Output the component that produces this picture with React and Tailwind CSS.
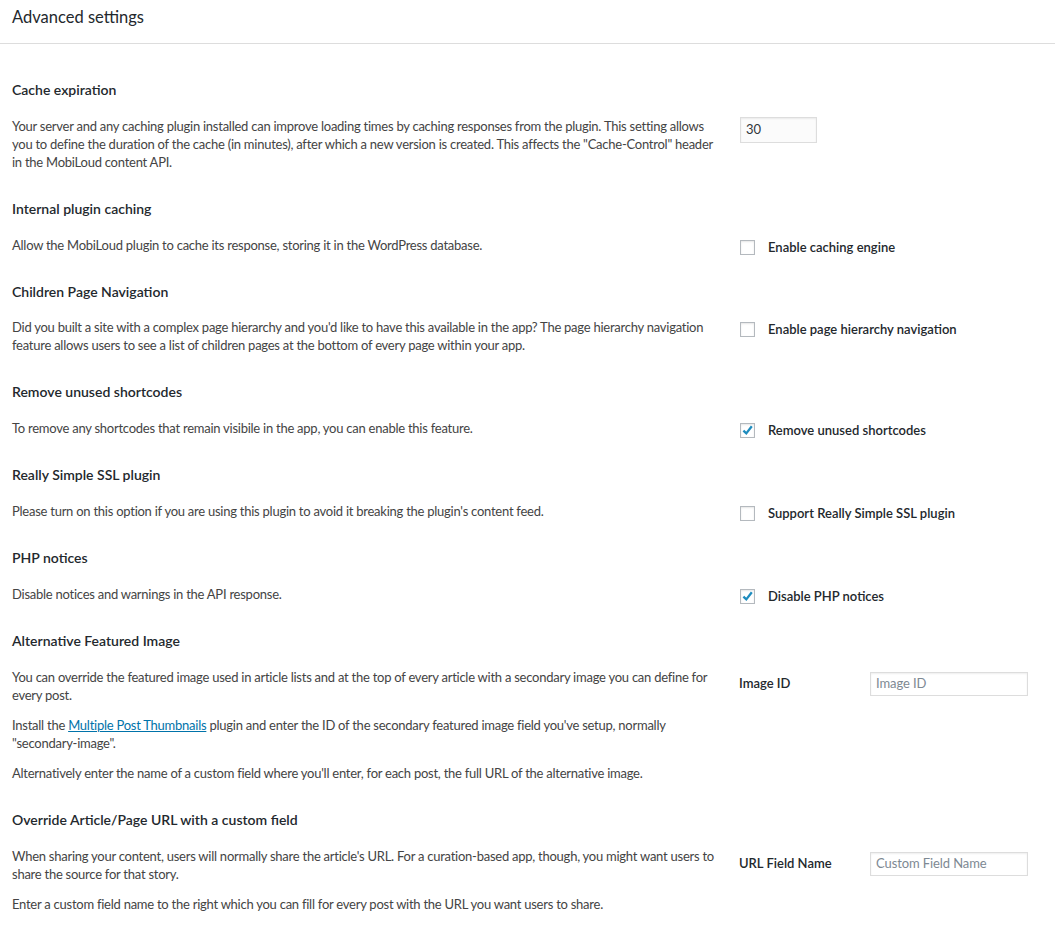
function Checkbox({ checked }) {
  return (
    <span className="relative inline-flex w-[15px] h-[15px] shrink-0 border border-[#b4b9be] bg-white shadow-[inset_0_1px_2px_rgba(0,0,0,0.1)]">
      {checked && (
        <svg viewBox="0 0 15 15" className="absolute left-[-1px] top-[-1px] w-[15px] h-[15px]">
          <path d="M3.4 7.6 L6.3 10.4 L11.8 3.3" fill="none" stroke="#1e8cbe" strokeWidth="2.3" strokeLinecap="butt" strokeLinejoin="miter" />
        </svg>
      )}
    </span>
  );
}

function CheckControl({ checked, label }) {
  return (
    <div className="flex items-center h-[16px] mt-[3px] -mb-[1px]">
      <Checkbox checked={checked} />
      <span className="ml-[13px] mt-px text-[13px] font-semibold text-[#23282d] whitespace-nowrap">{label}</span>
    </div>
  );
}

function FieldControl({ label, placeholder, top }) {
  return (
    <div className={`flex items-center h-[24px] ${top}`}>
      <span className="w-[131px] -ml-px text-[13px] font-semibold text-[#23282d]">{label}</span>
      <div className="w-[158px] h-[24px] border border-[#dddddd] bg-white shadow-[inset_0_1px_2px_rgba(0,0,0,0.07)] flex items-center pl-[5px] text-[13px] text-[#7e8993] tracking-[-0.1px]">
        {placeholder}
      </div>
    </div>
  );
}

function Section({ title, children, control, tight }) {
  return (
    <section className="mb-[28px]">
      <h3 className="px-3 text-[14px] leading-[20px] font-semibold text-[#23282d]">{title}</h3>
      <div className={`flex ${tight ? 'mt-[16px]' : 'mt-[17px]'}`}>
        <div className="w-[740px] shrink-0 pl-3 pr-[8px] flex flex-col gap-[12px] text-[13px] leading-[18px] tracking-[-0.25px] text-[#444444]">
          {children}
        </div>
        <div className="flex-1">{control}</div>
      </div>
    </section>
  );
}

export default function App() {
  return (
    <div className="min-h-[935px] bg-white font-['Lato',sans-serif] text-[#444444]">
      <header className="h-[44px] border-b border-[#dddddd] px-3 pt-[6px] text-[16.5px] leading-[22px] text-[#23282d]">
        Advanced settings
      </header>
      <div className="pt-[36px]">
        <Section
          title="Cache expiration"
          control={
            <div className="w-[77px] h-[26px] border border-[#dddddd] bg-[#fbfbfb] shadow-[inset_0_1px_2px_rgba(0,0,0,0.07)] flex items-center pl-[5px] text-[13px] text-[#32373c]">
              30
            </div>
          }
        >
          <p className="whitespace-nowrap">
            Your server and any caching plugin installed can improve loading times by caching responses from the plugin. This setting allows
            <br />
            you to define the duration of the cache (in minutes), after which a new version is created. This affects the "Cache-Control" header
            <br />
            in the MobiLoud content API.
          </p>
        </Section>

        <Section title="Internal plugin caching" control={<CheckControl label="Enable caching engine" />}>
          <p className="whitespace-nowrap">Allow the MobiLoud plugin to cache its response, storing it in the WordPress database.</p>
        </Section>

        <Section tight title="Children Page Navigation" control={<CheckControl label="Enable page hierarchy navigation" />}>
          <p className="whitespace-nowrap">
            Did you built a site with a complex page hierarchy and you'd like to have this available in the app? The page hierarchy navigation
            <br />
            feature allows users to see a list of children pages at the bottom of every page within your app.
          </p>
        </Section>

        <Section title="Remove unused shortcodes" control={<CheckControl checked label="Remove unused shortcodes" />}>
          <p className="whitespace-nowrap">To remove any shortcodes that remain visibile in the app, you can enable this feature.</p>
        </Section>

        <Section title="Really Simple SSL plugin" control={<CheckControl label="Support Really Simple SSL plugin" />}>
          <p className="whitespace-nowrap">Please turn on this option if you are using this plugin to avoid it breaking the plugin's content feed.</p>
        </Section>

        <Section title="PHP notices" control={<CheckControl checked label="Disable PHP notices" />}>
          <p className="whitespace-nowrap">Disable notices and warnings in the API response.</p>
        </Section>

        <Section
          title="Alternative Featured Image"
          control={<FieldControl label="Image ID" placeholder="Image ID" top="mt-[4px]" />}
        >
          <p className="whitespace-nowrap">
            You can override the featured image used in article lists and at the top of every article with a secondary image you can define for
            <br />
            every post.
          </p>
          <p className="whitespace-nowrap">
            Install the{' '}
            <a href="#" className="text-[#0073aa] underline">
              Multiple Post Thumbnails
            </a>{' '}
            plugin and enter the ID of the secondary featured image field you've setup, normally
            <br />
            "secondary-image".
          </p>
          <p className="whitespace-nowrap">
            Alternatively enter the name of a custom field where you'll enter, for each post, the full URL of the alternative image.
          </p>
        </Section>

        <Section
          title="Override Article/Page URL with a custom field"
          control={<FieldControl label="URL Field Name" placeholder="Custom Field Name" top="mt-[5px]" />}
        >
          <p className="whitespace-nowrap">
            When sharing your content, users will normally share the article's URL. For a curation-based app, though, you might want users to
            <br />
            share the source for that story.
          </p>
          <p className="whitespace-nowrap">Enter a custom field name to the right which you can fill for every post with the URL you want users to share.</p>
        </Section>
      </div>
    </div>
  );
}
